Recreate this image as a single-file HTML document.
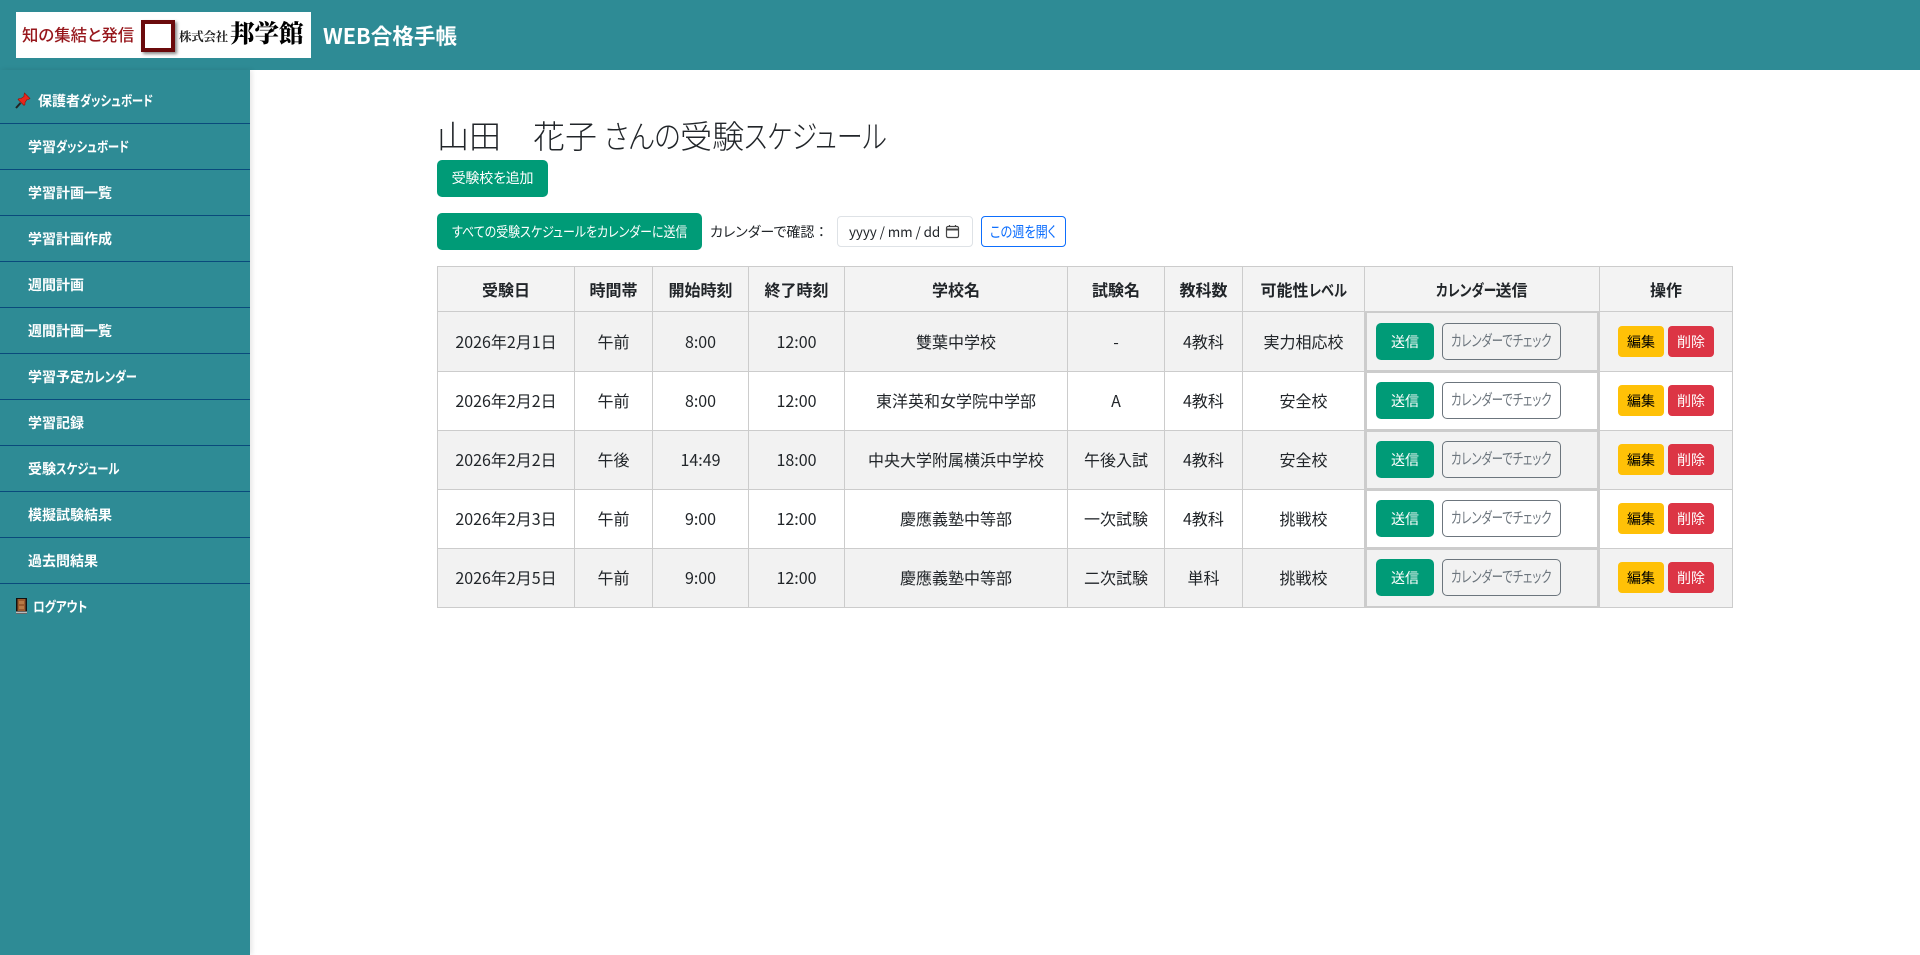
<!DOCTYPE html>
<html lang="ja"><head><meta charset="utf-8"><title>受験スケジュール</title>
<style>
*{box-sizing:border-box}
html,body{margin:0;padding:0;width:1920px;height:955px;overflow:hidden;background:#fff;color:#212529;font-family:"Noto Sans CJK JP","Liberation Sans",sans-serif;font-size:14px;font-feature-settings:"palt"}
.k{display:inline-block;transform-origin:0 50%;white-space:nowrap;text-align:left}
#hd{position:absolute;left:0;top:0;width:1920px;height:70px;background:#2e8b95}
#logo{position:absolute;left:16px;top:12px;width:295px;height:46px;background:#fff;overflow:hidden}
#logo span{position:absolute;white-space:nowrap;line-height:1}
#box{position:absolute;left:125px;top:8px;width:34px;height:32px;border:4px solid #6b0a0c;box-shadow:2px 2px 3px #888}
#ttl{position:absolute;left:323px;top:21px;color:#fff;font-size:21.6px;font-weight:700;line-height:30px;white-space:nowrap}
#sb{position:absolute;left:0;top:70px;width:250px;height:885px;background:#2e8b95;box-shadow:2px 0 5px rgba(0,0,0,.1)}
#sb div{position:absolute;left:0;width:250px;height:46px;border-bottom:1px solid #0a4a7c;color:#fff;font-weight:700;font-size:14px;line-height:47px;padding-left:28px;white-space:nowrap}
#sb div.n{border-bottom:0}
#sb svg{position:absolute;left:15px;top:14px}
h2{position:absolute;left:437px;top:113px;margin:0;font-size:32px;font-weight:300;line-height:44px;white-space:nowrap}
.b{position:absolute;border-radius:5px;text-align:center;white-space:nowrap;font-size:14px;line-height:37px;height:37px;color:#fff;background:#009b77}
#tb{position:absolute;left:437px;top:266px;width:1295px;border-collapse:collapse;table-layout:fixed}
#tb td,#tb th{border:1px solid #ccc;text-align:center;padding:0;font-size:16px;position:relative;white-space:nowrap}
#tb th{height:45px;background:#f3f3f3;font-size:16px;font-weight:700}
#tb td{height:59px;font-weight:400;padding-bottom:2px}
#tb tbody tr:first-child td{height:60px}
#tb tbody tr:nth-child(odd) td{background:#f2f2f2}
.cal{position:absolute;left:0;right:0;top:0;bottom:0;border:2px solid #ccc;margin:-1px 0}
.s{position:absolute;left:9px;top:9px;width:58px;height:37px;background:#009b77;color:#fff;border-radius:5px;font-size:14px;line-height:39px}
.c{position:absolute;left:75px;top:9px;width:119px;height:37px;border:1px solid #6c757d;border-radius:5px;color:#6c757d;font-size:15.5px;line-height:32px;text-align:left;padding-left:8px}
.c .k{width:101px;transform:scaleX(.73)}
#tb tbody tr:first-child .s,#tb tbody tr:first-child .c{top:10px}
.e,.d{position:absolute;top:13px;width:46px;height:31px;border-radius:4px;font-size:14px;line-height:33px}
#tb tbody tr:first-child .e,#tb tbody tr:first-child .d{top:14px}
.e{left:18px;background:#ffc107;color:#000}
.d{left:68px;background:#dc3545;color:#fff}
</style></head><body>
<div id="hd">
 <div id="logo">
  <span style="left:6px;top:14px;font-size:16.4px;font-weight:500;color:#97171c">知の集結と発信</span>
  <div id="box"></div>
  <span style="left:163px;top:18px;font-size:12.5px;font-weight:700;color:#222;font-family:'Noto Serif CJK SC',serif;letter-spacing:-.3px">株式会社</span>
  <span style="left:214px;top:9px;font-size:24.5px;font-weight:900;color:#000;font-family:'Noto Serif CJK SC',serif">邦学館</span>
 </div>
 <div id="ttl">WEB合格手帳</div>
</div>
<div id="sb">
 <div style="top:8px;padding-left:38px"><svg width="16" height="17" viewBox="0 0 16 17"><path d="M5.500 11L1 16" stroke="#222" stroke-width="2"/><path d="M9.500 1l5.500 5.500-1.500 1-1.500 0-2 3 0 2-1 1-6-6 1-1 2 0 3-2 0-1.500z" fill="#e8261c" stroke="#8a1208" stroke-width=".6"/></svg>保護者<span class="k" style="width:73px;transform:scaleX(.81)">ダッシュボード</span></div>
 <div style="top:54px">学習<span class="k" style="width:73px;transform:scaleX(.81)">ダッシュボード</span></div>
 <div style="top:100px">学習計画一覧</div>
 <div style="top:146px">学習計画作成</div>
 <div style="top:192px">週間計画</div>
 <div style="top:238px">週間計画一覧</div>
 <div style="top:284px">学習予定<span class="k" style="width:52px;transform:scaleX(.8)">カレンダー</span></div>
 <div style="top:330px">学習記録</div>
 <div style="top:376px">受験<span class="k" style="width:64px;transform:scaleX(.81)">スケジュール</span></div>
 <div style="top:422px">模擬試験結果</div>
 <div style="top:468px">過去問結果</div>
 <div class="n" style="top:514px;padding-left:33px"><svg width="14" height="17" viewBox="0 0 14 17"><rect x="1" y="0" width="11" height="16" fill="#111"/><rect x="2.500" y="1" width="8" height="12" fill="#9a5a2c"/><rect x="4" y="3" width="5" height="3" fill="#b77a45"/><rect x="4" y="8" width="5" height="3" fill="#b77a45"/><rect x="1" y="13.500" width="11" height="2" fill="#bbb"/></svg><span class="k" style="width:54px;transform:scaleX(.83)">ログアウト</span></div>
</div>

<h2>山田　花子 <span class="k" style="width:76px;transform:scaleX(.86)">さんの</span>受験<span class="k" style="width:142px;transform:scaleX(.81)">スケジュール</span></h2>
<div class="b" style="left:437px;top:160px;width:111px;letter-spacing:-.2px">受験校を追加</div>
<div class="b" style="left:437px;top:213px;width:265px;line-height:39px;text-align:left;padding-left:15px"><span class="k" style="width:234px;transform:scaleX(.854)">すべての受験スケジュールをカレンダーに送信</span></div>
<div style="position:absolute;left:710px;top:218px;font-size:14px;line-height:28px;white-space:nowrap">カレンダーで確認<span style="font-feature-settings:normal">：</span></div>
<div style="position:absolute;left:837px;top:216px;width:136px;height:31px;border:1px solid #dee2e6;border-radius:4px;font-size:13.5px;line-height:29px;padding-left:11px;white-space:nowrap;letter-spacing:-.1px">yyyy / mm / dd
 <svg style="position:absolute;left:107px;top:7px" width="15" height="15" viewBox="0 0 15 15" fill="none" stroke="#444" stroke-width="1.2"><rect x="1.500" y="2.500" width="12" height="11" rx="1.500"/><path d="M1.500 5.500h12" stroke-width="2"/><path d="M4.500 1v2M10.500 1v2"/></svg></div>
<div style="position:absolute;left:981px;top:216px;width:85px;height:31px;border:1px solid #0d6efd;border-radius:4px;color:#0d6efd;font-size:15px;line-height:29px;text-align:left;padding-left:8px;white-space:nowrap"><span class="k" style="width:68px;transform:scaleX(.81)">この週を開く</span></div>

<table id="tb">
<colgroup><col style="width:137px"><col style="width:78px"><col style="width:96px"><col style="width:96px"><col style="width:223px"><col style="width:97px"><col style="width:78px"><col style="width:122px"><col style="width:235px"><col style="width:133px"></colgroup>
<thead><tr><th>受験日</th><th>時間帯</th><th>開始時刻</th><th>終了時刻</th><th>学校名</th><th>試験名</th><th>教科数</th><th>可能性<span class="k" style="width:38px;transform:scaleX(.82)">レベル</span></th><th><span class="k" style="width:59px;transform:scaleX(.8)">カレンダー</span>送信</th><th>操作</th></tr></thead>
<tbody>
<tr><td>2026年2月1日</td><td>午前</td><td>8:00</td><td>12:00</td><td>雙葉中学校</td><td>-</td><td>4教科</td><td>実力相応校</td><td><div class="cal"><span class="s">送信</span><span class="c"><span class="k">カレンダーでチェック</span></span></div></td><td><span class="e">編集</span><span class="d">削除</span></td></tr>
<tr><td>2026年2月2日</td><td>午前</td><td>8:00</td><td>12:00</td><td>東洋英和女学院中学部</td><td>A</td><td>4教科</td><td>安全校</td><td><div class="cal"><span class="s">送信</span><span class="c"><span class="k">カレンダーでチェック</span></span></div></td><td><span class="e">編集</span><span class="d">削除</span></td></tr>
<tr><td>2026年2月2日</td><td>午後</td><td>14:49</td><td>18:00</td><td>中央大学附属横浜中学校</td><td>午後入試</td><td>4教科</td><td>安全校</td><td><div class="cal"><span class="s">送信</span><span class="c"><span class="k">カレンダーでチェック</span></span></div></td><td><span class="e">編集</span><span class="d">削除</span></td></tr>
<tr><td>2026年2月3日</td><td>午前</td><td>9:00</td><td>12:00</td><td>慶應義塾中等部</td><td>一次試験</td><td>4教科</td><td>挑戦校</td><td><div class="cal"><span class="s">送信</span><span class="c"><span class="k">カレンダーでチェック</span></span></div></td><td><span class="e">編集</span><span class="d">削除</span></td></tr>
<tr><td>2026年2月5日</td><td>午前</td><td>9:00</td><td>12:00</td><td>慶應義塾中等部</td><td>二次試験</td><td>単科</td><td>挑戦校</td><td><div class="cal"><span class="s">送信</span><span class="c"><span class="k">カレンダーでチェック</span></span></div></td><td><span class="e">編集</span><span class="d">削除</span></td></tr>
</tbody></table>
</body></html>
